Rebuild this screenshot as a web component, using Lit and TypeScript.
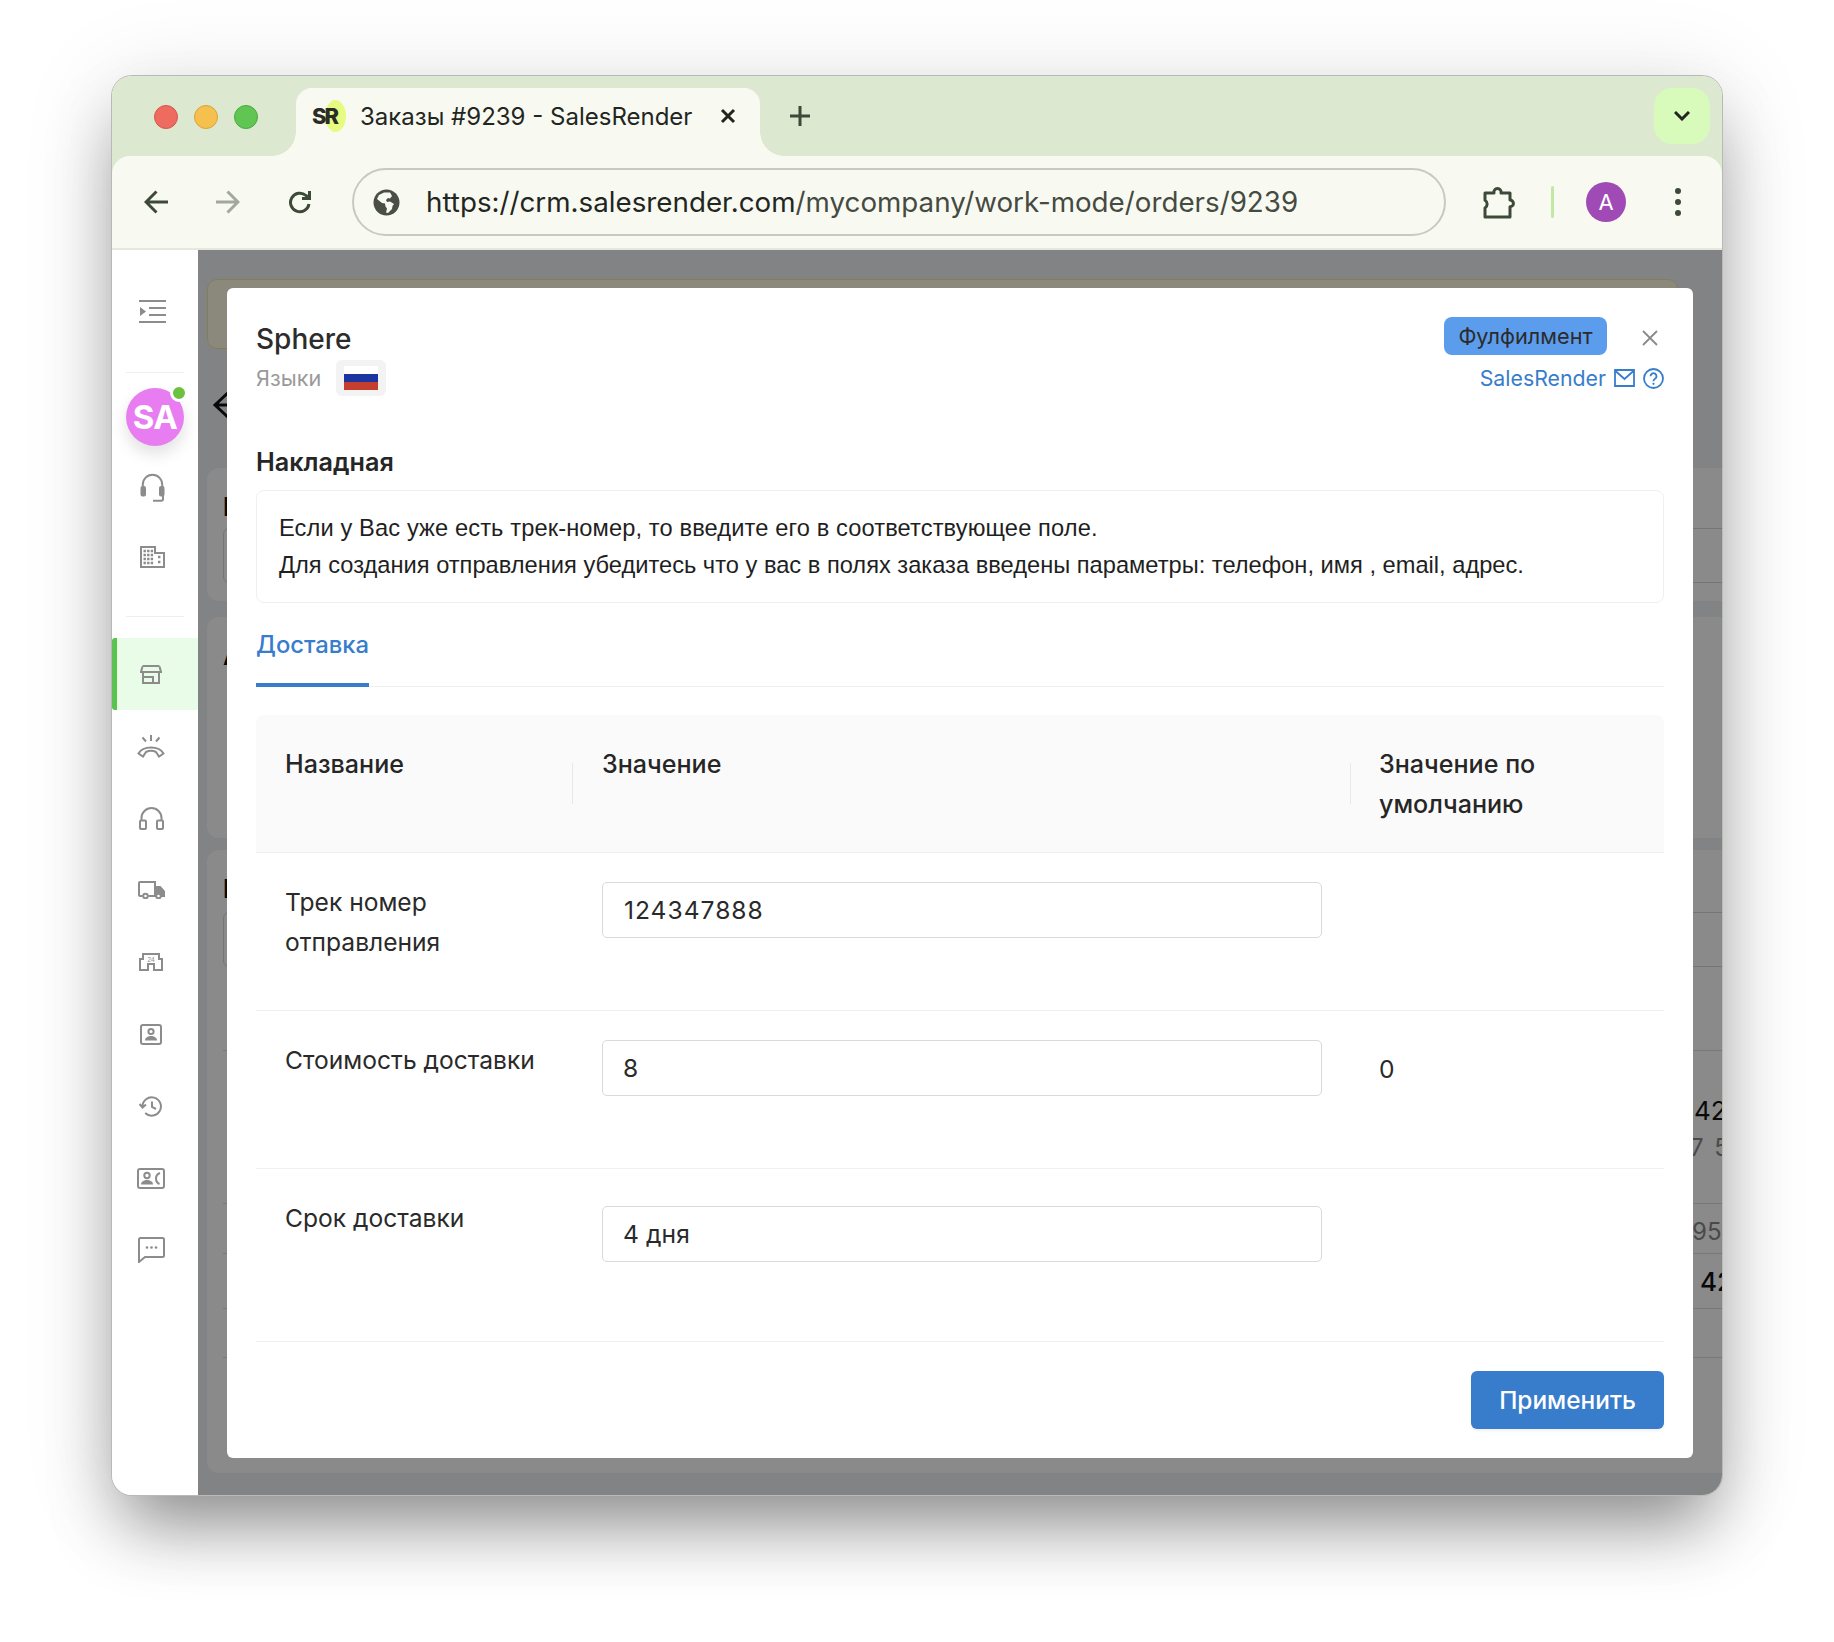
import { LitElement, html, css } from "lit";
import { customElement } from "lit/decorators.js";

const sideIcons = {
  menu: html`<svg width="27" height="23" viewBox="0 0 27 23"><path class="f" d="M0 0h27v2H0zM10 7h17v2H10zM10 14h17v2H10zM0 21h27v2H0zM1 7l6 4.5L1 16z"/></svg>`,
  headset: html`<svg width="25" height="29" viewBox="0 0 25 29"><path class="s" stroke-width="2.4" d="M2.8 14v-2.5a9.7 9.7 0 0 1 19.4 0V14"/><rect class="f" x="0.5" y="13" width="5.5" height="10.5" rx="2"/><rect class="f" x="19" y="13" width="5.5" height="10.5" rx="2"/><path class="s" d="M23 23v3a1.8 1.8 0 0 1-1.8 1.8H13"/></svg>`,
  building: html`<svg width="25" height="22" viewBox="0 0 25 22"><path class="s" d="M1 21V1h14v6h9v14z"/><path class="s thick" stroke-dasharray="2.400 1.200" d="M3.500 5h10M3.500 9h10M3.500 13h10M3.500 17h10"/><path class="s thick" stroke-dasharray="2.400 1.600" d="M18 11h4M18 16h4"/></svg>`,
  store: html`<svg width="22" height="19" viewBox="0 0 22 19"><path class="s" d="M2.500 1h17M2.500 1.500 1 7h20l-1.500-5.500M3 7v11h16V7M13 18v-6H3"/></svg>`,
  call: html`<svg width="28" height="23" viewBox="0 0 28 23"><path class="s" d="M14 0v6M5.500 2.500 9 6.500M22.500 2.500 19 6.500M1.500 18.500C6 10.500 22 10.500 26.500 18.500l-4.500 3-3-4.500c-3-1.500-7-1.500-10 0l-3 4.500z"/></svg>`,
  phones: html`<svg width="25" height="24" viewBox="0 0 25 24"><path class="s" d="M2.500 15v-3a10 10 0 0 1 20 0v3"/><rect class="s" x="1" y="14.500" width="6" height="8.500" rx="1"/><rect class="s" x="18" y="14.500" width="6" height="8.500" rx="1"/></svg>`,
  truck: html`<svg width="27" height="18" viewBox="0 0 27 18"><path class="s" d="M4.500 15H2a1 1 0 0 1-1-1V2a1 1 0 0 1 1-1h15v14h-6.500"/><path class="f" d="M18 5h4.500l4.500 5v6h-4l-1-3h-4z"/><circle class="s w" cx="7.500" cy="15" r="2.300"/><circle class="s w" cx="20.500" cy="15" r="2.300"/></svg>`,
  h24: html`<svg width="24" height="18" viewBox="0 0 24 18"><path class="s" d="M1 17V6h3V1h16v5h3v11h-8v-6H9v6z"/><text x="12" y="8.500" text-anchor="middle" class="t">24</text></svg>`,
  contact: html`<svg width="22" height="21" viewBox="0 0 22 21"><rect class="s" x="1" y="1" width="20" height="19" rx="2"/><circle class="s" cx="11" cy="7.500" r="2.600"/><path class="f" d="M5 16.500c0-6 12-6 12 0z"/></svg>`,
  history: html`<svg width="24" height="21" viewBox="0 0 24 21"><path class="s" d="M3.500 10.500a9.200 9.200 0 1 1 2.700 6.500M.5 8l3 3.500L7 8.500M13 5.500V11l4 2"/></svg>`,
  contact2: html`<svg width="28" height="21" viewBox="0 0 28 21"><rect class="s" x="1" y="1" width="26" height="19" rx="2"/><circle class="s" cx="10" cy="7.500" r="2.700"/><path class="f" d="M4 16.500c0-6 12-6 12 0z"/><path class="s" d="M23 5c-3 1-4 3-4 5.500s1 4.500 3.500 5.500"/></svg>`,
  chat: html`<svg width="27" height="26" viewBox="0 0 27 26"><path class="s" d="M1 2.500A1.500 1.500 0 0 1 2.500 1h22A1.500 1.500 0 0 1 26 2.500v16a1.500 1.500 0 0 1-1.500 1.500H7l-6 5z"/><circle class="f" cx="9" cy="10.500" r="1.300"/><circle class="f" cx="13.500" cy="10.500" r="1.300"/><circle class="f" cx="18" cy="10.500" r="1.300"/></svg>`,
};

const navIcons = ["store", "call", "phones", "truck", "h24", "contact", "history", "contact2", "chat"] as const;

const rows = [
  { cls: "r1", label: "Трек номер отправления", value: "124347888", def: "" },
  { cls: "r2", label: "Стоимость доставки", value: "8", def: "0" },
  { cls: "r3", label: "Срок доставки", value: "4 дня", def: "" },
];

@customElement("app-root")
export class AppRoot extends LitElement {
  static styles = css`
    :host { display: block; width: 1834px; height: 1642px; background: #fff; font-family: Inter, "Noto Sans", sans-serif; color: #262626; }
    * { box-sizing: border-box; }
    .stage { padding: 76px 112px 0; }
    .win { width: 1610px; height: 1419px; border-radius: 20px; background: #dce8d0; display: flex; flex-direction: column; overflow: hidden; }
    .shadow { border-radius: 20px; box-shadow: 0 0 0 1px #b9bab6, 0 40px 70px -12px rgba(0,0,0,.42), 0 8px 90px 6px rgba(0,0,0,.1); }

    .strip { height: 80px; flex: none; display: flex; align-items: flex-end; padding-left: 42px; padding-right: 12px; }
    .lights { display: flex; gap: 16px; margin-bottom: 27px; }
    .light { width: 24px; height: 24px; border-radius: 50%; border: 1px solid; }
    .red { background: #ee6b60; border-color: #d5574d; }
    .yellow { background: #f6c04f; border-color: #dca239; }
    .green { background: #61c554; border-color: #4aa93e; }
    .tab { position: relative; margin-left: 38px; width: 464px; height: 68px; background: #f8faf2; border-radius: 16px 16px 0 0; display: flex; align-items: center; padding: 0 0 12px 16px; color: #23261f; }
    .tab::before, .tab::after { content: ""; position: absolute; bottom: 0; width: 24px; height: 24px; }
    .tab::before { left: -24px; background: radial-gradient(circle at 0 0, transparent 23.500px, #f8faf2 24px); }
    .tab::after { right: -24px; background: radial-gradient(circle at 100% 0, transparent 23.500px, #f8faf2 24px); }
    .fav { position: relative; width: 32px; height: 32px; font-weight: 800; font-size: 22px; line-height: 32px; letter-spacing: -2px; flex: none; color: #2a2c26; white-space: nowrap; }
    .fav i { position: absolute; left: 13px; top: 0; width: 21px; height: 32px; border-radius: 50%; background: #e6fb80; }
    .fav span { position: relative; }
    .tab-title { margin-left: 16px; font-size: 24px; white-space: nowrap; width: 340px; }
    .tab-x { margin-left: 20px; display: flex; }
    .plus { margin-left: 30px; margin-bottom: 30px; display: flex; }
    .chev { margin-left: auto; margin-bottom: 12px; width: 56px; height: 56px; border-radius: 18px; background: #d8fbbc; display: flex; align-items: center; justify-content: center; }
    .ink { fill: none; stroke: #3d4a38; stroke-width: 3; }
    .ink2 { fill: none; stroke: #23261f; stroke-width: 3; }
    .dim { fill: none; stroke: #a4a79f; stroke-width: 3; }

    .bar { height: 94px; flex: none; background: #f8faf2; border-radius: 18px 18px 0 0; border-bottom: 2px solid #e6e8df; display: flex; align-items: center; padding-left: 24px; }
    .tool { width: 40px; height: 40px; display: flex; align-items: center; justify-content: center; flex: none; }
    .tool + .tool { margin-left: 32px; }
    .addr { margin-left: 32px; width: 1094px; height: 68px; border: 2px solid #c8cac0; border-radius: 34px; display: flex; align-items: center; padding-left: 19px; flex: none; }
    .url { margin-left: 26px; font-size: 27.750px; color: #454a42; white-space: nowrap; }
    .url b { font-weight: 400; color: #23261f; }
    .ext { margin-left: 33px; }
    .sep { width: 3px; height: 32px; background: #c2e8a8; margin-left: 32px; border-radius: 2px; flex: none; }
    .acc { margin-left: 32px; width: 40px; height: 40px; border-radius: 50%; background: #a04bb5; color: #fff; display: flex; align-items: center; justify-content: center; font-size: 22px; flex: none; }
    .dots { margin-left: 32px; }

    .body { flex: 1; display: flex; min-height: 0; }
    .side { width: 86px; flex: none; background: #fff; display: flex; flex-direction: column; padding-top: 25px; color: #8c8c8c; }
    .side .s { fill: none; stroke: #8c8c8c; stroke-width: 2; }
    .side .thick { stroke-width: 2.400; }
    .side .f { fill: #8c8c8c; }
    .side .w { fill: #fff; }
    .side .t { font: 6.500px "Liberation Sans", sans-serif; fill: #8c8c8c; }
    .ic { height: 70px; display: flex; align-items: center; justify-content: center; padding-right: 6px; flex: none; }
    .ic.top { height: 72px; }
    .rule { height: 1px; background: #efefef; margin: 25px 14px 0; flex: none; }
    .rule.second { margin-top: 24px; }
    .ava { position: relative; width: 58px; height: 58px; border-radius: 50%; background: #e77df0; margin: 15px 0 6px 14px; color: #fff; font-size: 33px; font-weight: 700; display: flex; align-items: center; justify-content: center; box-shadow: 0 8px 16px rgba(0,0,0,.12); flex: none; letter-spacing: -.5px; }
    .ava i { position: absolute; right: -4px; top: -4px; width: 18px; height: 18px; border-radius: 50%; background: #6cc13f; border: 3px solid #fff; }
    .nav { margin-top: 21px; display: flex; flex-direction: column; }
    .item { height: 72px; display: flex; align-items: center; justify-content: center; padding-right: 8px; position: relative; }
    .item.on { background: #e8fce8; border-left: 5px solid #5ac24f; border-radius: 3px 0 0 3px; padding-right: 13px; }

    .main { flex: 1; position: relative; overflow: hidden; background: #f1f3f4; min-width: 0; }
    .page { padding: 29px 0 0 9px; width: 1600px; color: #111; }
    .banner { width: 1471px; height: 70px; background: #fffde6; border: 1px solid #f5e6a4; border-radius: 10px; }
    .back { margin: 33px 0 0 5px; height: 46px; display: flex; align-items: center; }
    .card { background: #fff; border-radius: 12px; padding: 0 0 0 16px; font-size: 26px; font-weight: 700; line-height: 30px; }
    .c1 { margin-top: 40px; height: 133px; padding-top: 24px; }
    .c2 { height: 221px; padding-top: 24px; margin-top: 16px; }
    .c3 { height: 623px; padding-top: 24px; margin-top: 12px; }
    .field { height: 55px; border: 1px solid #d9d9d9; border-radius: 6px; margin-top: 6px; margin-right: -100px; }
    .c3 .field { margin-top: 8px; }
    .ln { border-bottom: 1px solid #dedede; font-weight: 400; white-space: nowrap; font-size: 26px; padding-left: 1471px; }
    .la { height: 84px; }
    .lb { height: 153px; padding-top: 42px; line-height: 36px; }
    .lc { height: 50px; padding-top: 13px; color: #8a8a8a; font-size: 24px; padding-left: 1469px; }
    .ld { height: 55px; padding-top: 13px; padding-left: 1477px; font-weight: 500; }
    .le { height: 49px; }
    .muted { color: #8a8a8a; font-size: 24px; margin-left: -4px; letter-spacing: 2px; }

    .over { position: absolute; inset: 0; background: rgba(0,0,0,.46); padding: 38px 29px 0 29px; }
    .modal { background: #fff; border-radius: 6px; padding: 29px; height: 1170px; }
    .head { display: flex; justify-content: space-between; align-items: flex-start; height: 79px; }
    h2 { margin: 2px 0 0; font-size: 28px; font-weight: 500; line-height: 41px; color: #2c2c2c; }
    .langs { display: flex; align-items: center; font-size: 21.700px; color: #9a9a9a; }
    .chip { margin-left: 15px; width: 50px; height: 36px; border-radius: 6px; background: #f3f3f3; display: flex; align-items: center; justify-content: center; }
    .flag { width: 34px; height: 24px; background: linear-gradient(#fff 33%, #1a35a0 33% 66%, #c63f2e 66%); }
    .hr { display: flex; flex-direction: column; align-items: flex-end; }
    .hr1 { display: flex; align-items: center; height: 38px; }
    .badge { width: 163px; height: 38px; background: #5c9cec; border-radius: 8px; display: flex; align-items: center; justify-content: center; font-size: 21.700px; color: #2b2b2b; }
    .x { margin: 4px 5px 0 34px; display: flex; }
    .hr2 { display: flex; align-items: center; height: 30px; margin-top: 8px; color: #377dcc; font-size: 21.300px; }
    .hr2 svg { margin-left: 8px; }
    h3 { margin: 46px 0 0; font-size: 25.200px; font-weight: 600; line-height: 40px; color: #262626; }
    .info { margin-top: 8px; height: 113px; border: 1px solid #f0f0f0; border-radius: 8px; padding: 19px 22px 0; font-family: "Liberation Sans", Arial, sans-serif; font-size: 23.670px; line-height: 37px; color: #1f1f1f; }
    .l1 { letter-spacing: .11px; }
    .tabs { margin-top: 23px; border-bottom: 1px solid #efefef; display: flex; }
    .t1 { color: #377dcc; font-size: 23.800px; font-weight: 500; line-height: 38px; padding-bottom: 19px; border-bottom: 4px solid #377dcc; width: 113px; margin-bottom: -1px; white-space: nowrap; }
    .table { margin-top: 28px; }
    .tr { display: grid; grid-template-columns: 316px 778px 1fr; border-bottom: 1px solid #f0f0f0; }
    .th { background: #fafafa; height: 138px; font-size: 25.100px; font-weight: 500; line-height: 40px; border-radius: 8px 8px 0 0; }
    .th > div { display: flex; padding-top: 29px; }
    .th > div:first-child { padding-left: 29px; }
    .vs { width: 1px; height: 41px; background: #e8e8e8; margin: 19px 29px 0 0; flex: none; }
    .th > div:last-child .vs { margin-right: 28px; }
    .td { font-size: 24.600px; line-height: 40px; color: #2a2a2a; }
    .td .n { padding-left: 29px; padding-top: 29px; padding-right: 10px; }
    .td .v { padding-left: 30px; }
    .td .d { padding-left: 29px; }
    .r1 { height: 158px; } .r1 .v { padding-top: 29px; } .r1 .n { padding-right: 60px; }
    .r2 { height: 158px; } .r2 .v { padding-top: 29px; } .r2 .n { padding-top: 29px; } .r2 .d { padding-top: 38px; }
    .r3 { height: 173px; } .r3 .v { padding-top: 37px; }
    .input { width: 720px; height: 56px; border: 1px solid #d9d9d9; border-radius: 5px; padding-left: 21px; display: flex; align-items: center; font-size: 24.600px; color: #2a2a2a; letter-spacing: 1px; }
    .r2 .input, .r3 .input { padding-left: 20px; }
    .r3 .input { letter-spacing: .1px; }
    .foot { margin-top: 29px; display: flex; justify-content: flex-end; }
    .btn { width: 193px; height: 58px; border-radius: 6px; background: #377dcc; color: #fff; font-size: 24.400px; font-weight: 500; display: flex; align-items: center; justify-content: center; box-shadow: 0 2px 3px rgba(0,0,0,.06); }
  `;

  render() {
    return html`<div class="stage"><div class="shadow"><div class="win">
      <div class="strip">
        <div class="lights"><div class="light red"></div><div class="light yellow"></div><div class="light green"></div></div>
        <div class="tab">
          <div class="fav"><i></i><span>SR</span></div>
          <div class="tab-title">Заказы #9239 - SalesRender</div>
          <div class="tab-x"><svg width="16" height="16" viewBox="0 0 16 16"><path class="ink2" d="M2 2l12 12M14 2L2 14"/></svg></div>
        </div>
        <div class="plus"><svg width="20" height="20" viewBox="0 0 20 20"><path class="ink" d="M10 0v20M0 10h20"/></svg></div>
        <div class="chev"><svg width="16" height="10" viewBox="0 0 16 10"><path class="ink2" d="M1 1l7 7 7-7"/></svg></div>
      </div>
      <div class="bar">
        <div class="tool"><svg width="24" height="24" viewBox="0 0 24 24"><path class="ink" d="M24 12H3M12.500 1.500 2 12l10.500 10.500"/></svg></div>
        <div class="tool"><svg width="24" height="24" viewBox="0 0 24 24"><path class="dim" d="M0 12h21M11.500 1.500 22 12 11.500 22.500"/></svg></div>
        <div class="tool"><svg width="24" height="25" viewBox="0 0 24 25"><path class="ink" d="M21 14a9.300 9.300 0 1 1-3-8.500L21 8M21.500 1v7.500H14"/></svg></div>
        <div class="addr">
          <svg width="27" height="27" viewBox="0 0 27 27"><circle cx="13.500" cy="13.500" r="13" fill="#494e47"/><path fill="#f8faf2" d="M11 3.500 6 6 4 10l5 4 3 .5.500 3 1.500 2-1 4 2 .5 4-4 .500-3 1.500-2-4-2.500-3 .5-1-2 2-2 2 .5 2-2.500-2-3.500z"/></svg>
          <div class="url"><b>https://crm.salesrender.com</b>/mycompany/work-mode/orders/9239</div>
        </div>
        <div class="tool ext"><svg width="34" height="36" viewBox="0 0 34 36"><path class="ink" d="M3 9h9a3.600 3.600 0 1 1 7 0h9v7a3.400 3.400 0 0 1 0 6.800V33H3v-9a4.600 4.600 0 0 0 0-7.800z" stroke-linejoin="round"/></svg></div>
        <div class="sep"></div>
        <div class="acc">A</div>
        <div class="tool dots"><svg width="8" height="30" viewBox="0 0 8 30" fill="#3d4a38"><circle cx="4" cy="4" r="3"/><circle cx="4" cy="15" r="3"/><circle cx="4" cy="26" r="3"/></svg></div>
      </div>
      <div class="body">
        <aside class="side">
          <div class="ic top">${sideIcons.menu}</div>
          <div class="rule"></div>
          <div class="ava">SA<i></i></div>
          <div class="ic">${sideIcons.headset}</div>
          <div class="ic">${sideIcons.building}</div>
          <div class="rule second"></div>
          <div class="nav">
            ${navIcons.map((n, i) => html`<div class="item ${i === 0 ? "on" : ""}">${sideIcons[n]}</div>`)}
          </div>
        </aside>
        <main class="main">
          <div class="page">
            <div class="banner"></div>
            <div class="back"><svg width="60" height="36" viewBox="0 0 60 36"><path fill="none" stroke="#111" stroke-width="3" d="M60 18H4M20 2 3 18l17 16"/></svg></div>
            <div class="card c1">Н<div class="field"></div></div>
            <div class="card c2">А</div>
            <div class="card c3">Н<div class="field"></div>
              <div class="ln la"></div>
              <div class="ln lb">42<br /><span class="muted">7 5</span></div>
              <div class="ln lc">95</div>
              <div class="ln ld">42</div>
              <div class="ln le"></div>
            </div>
          </div>
          <div class="over">
            <div class="modal">
              <div class="head">
                <div>
                  <h2>Sphere</h2>
                  <div class="langs">Языки<div class="chip"><div class="flag"></div></div></div>
                </div>
                <div class="hr">
                  <div class="hr1">
                    <div class="badge">Фулфилмент</div>
                    <div class="x"><svg width="18" height="18" viewBox="0 0 18 18"><path fill="none" stroke="#8a8a8a" stroke-width="1.800" d="M2 2l14 14M16 2 2 16"/></svg></div>
                  </div>
                  <div class="hr2">SalesRender
                    <svg width="21" height="18" viewBox="0 0 21 18"><path fill="none" stroke="#377dcc" stroke-width="1.800" d="M1 1h19v16H1zM1.500 2l9 8 9-8"/></svg>
                    <svg width="21" height="21" viewBox="0 0 21 21"><circle cx="10.500" cy="10.500" r="9.500" fill="none" stroke="#377dcc" stroke-width="1.800"/><path fill="none" stroke="#377dcc" stroke-width="1.800" d="M7.500 8.200a3 3 0 1 1 4.500 2.600c-1 .6-1.500 1.200-1.500 2.400"/><circle cx="10.500" cy="15.800" r="1.100" fill="#377dcc"/></svg>
                  </div>
                </div>
              </div>
              <h3>Накладная</h3>
              <div class="info"><span class="l1">Если у Вас уже есть трек-номер, то введите его в соответствующее поле.</span><br />Для создания отправления убедитесь что у вас в полях заказа введены параметры: телефон, имя , email, адрес.</div>
              <div class="tabs"><div class="t1">Доставка</div></div>
              <div class="table">
                <div class="tr th">
                  <div>Название</div>
                  <div><span class="vs"></span>Значение</div>
                  <div><span class="vs"></span><span>Значение по умолчанию</span></div>
                </div>
                ${rows.map((r) => html`<div class="tr td ${r.cls}">
                  <div class="n">${r.label}</div>
                  <div class="v"><div class="input">${r.value}</div></div>
                  <div class="d">${r.def}</div>
                </div>`)}
              </div>
              <div class="foot"><div class="btn">Применить</div></div>
            </div>
          </div>
        </main>
      </div>
    </div></div></div>`;
  }
}
